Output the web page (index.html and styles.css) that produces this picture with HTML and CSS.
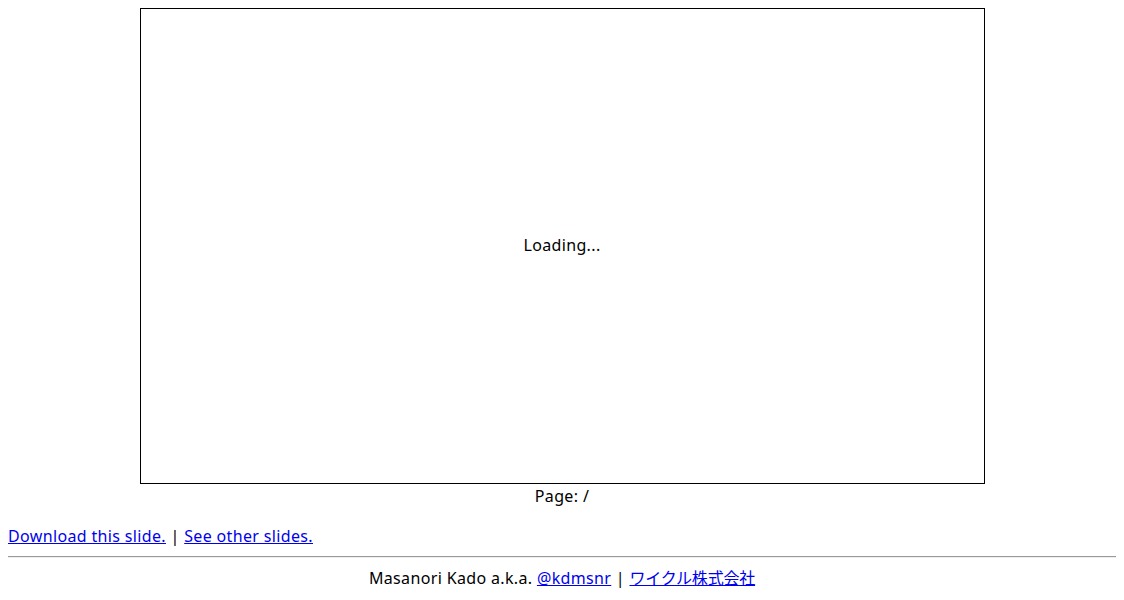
FILE: index.html
```html
<!DOCTYPE html>
<html lang="ja">
<head>
<meta charset="utf-8">
<title>Slide</title>
<link rel="stylesheet" href="styles.css">
</head>
<body>
<div class="viewer">
  <div class="slide">
    <div class="loading">Loading...</div>
  </div>
  <div class="page">Page: /</div>
</div>
<div class="links"><a href="#">Download this slide.</a> | <a href="#">See other slides.</a></div>
<hr class="rule">
<div class="footer">Masanori Kado a.k.a. <a href="#">@kdmsnr</a> | <a href="#" class="jp">ワイクル株式会社</a></div>
</body>
</html>
```
FILE: styles.css
```css
body {
  margin: 8px;
  font-family: "Noto Sans", "Noto Sans CJK JP", sans-serif;
  font-size: 16px;
  line-height: 24px;
  letter-spacing: 0.35px;
  color: #000;
  background: #fff;
}
a { color: #0000ee; }
.jp { letter-spacing: -0.2px; }
.viewer {
  display: flex;
  flex-direction: column;
  align-items: center;
}
.slide {
  width: 843px;
  height: 474px;
  border: 1px solid #000;
  display: flex;
  align-items: center;
  justify-content: center;
}
.loading { margin-top: -2px; }
.page { text-align: center; }
.links { margin-top: 16px; }
.rule {
  margin: 8px 0;
  border: none;
  border-top: 1px solid #9a9a9a;
  border-bottom: 1px solid #eeeeee;
  height: 0;
}
.footer { text-align: center; }
```
